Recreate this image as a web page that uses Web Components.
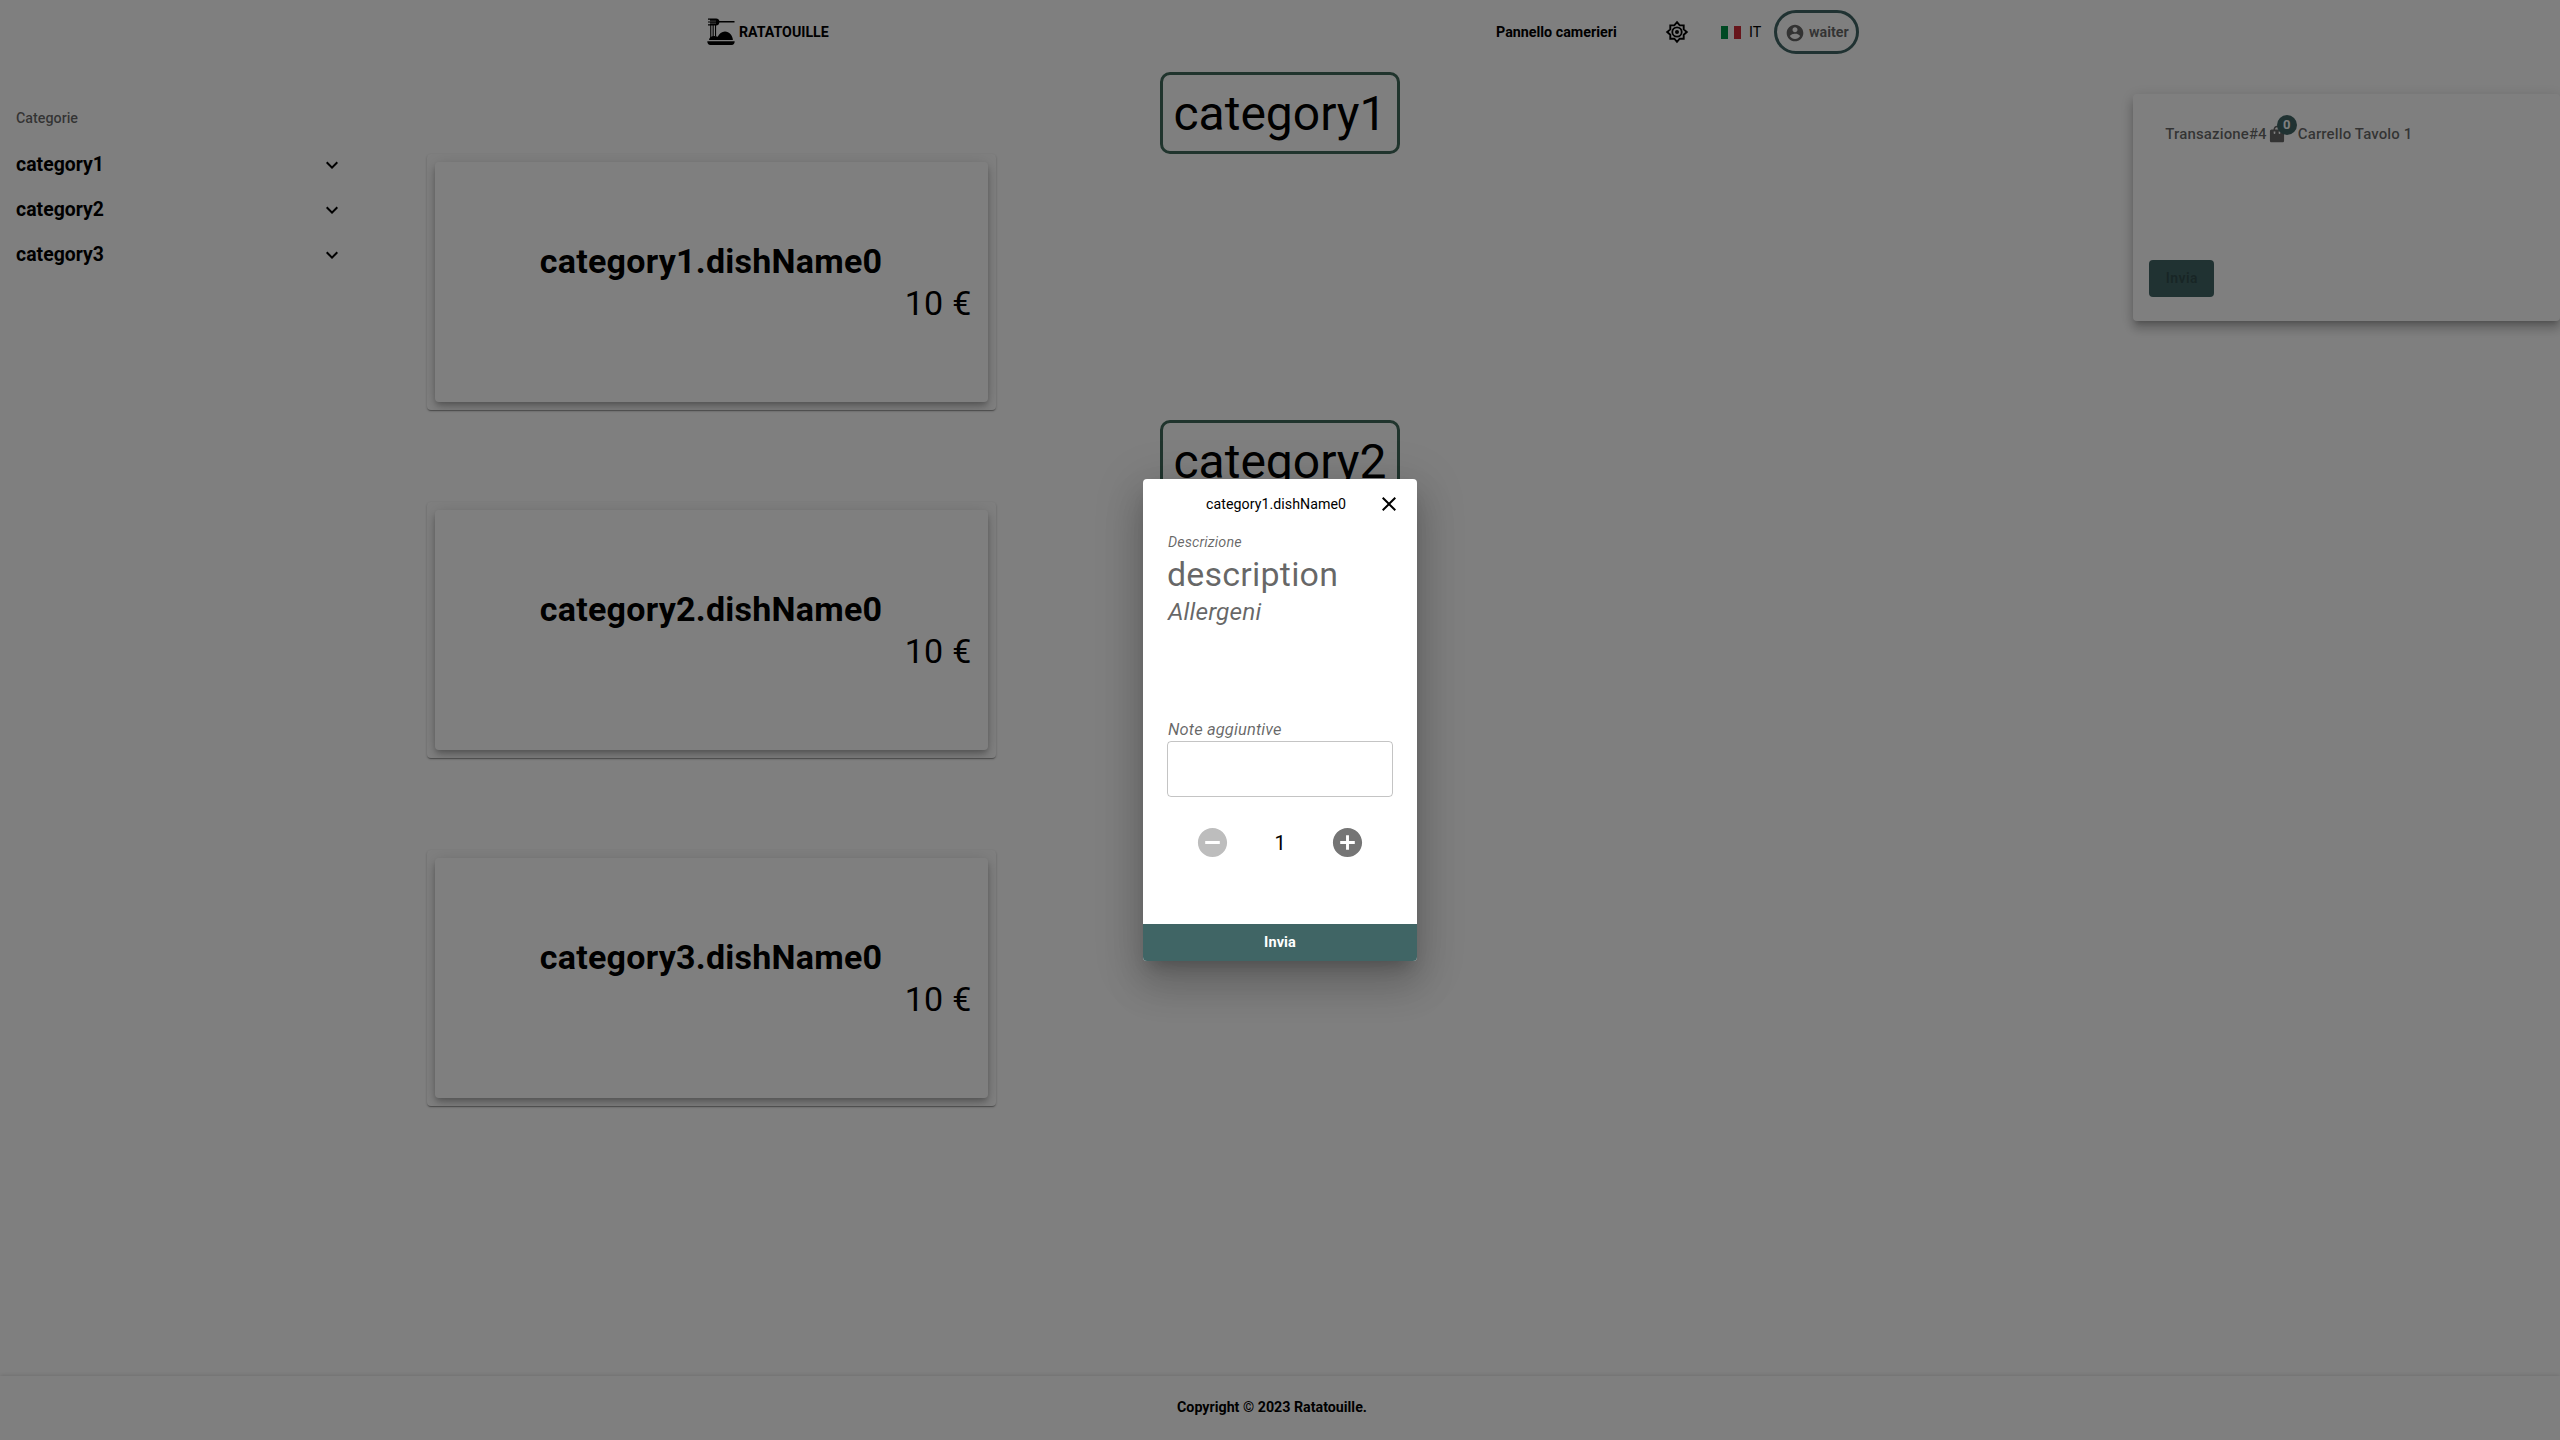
<!DOCTYPE html>
<html lang="it">
<head>
<meta charset="utf-8">
<title>Ratatouille</title>
<style>
html,body{margin:0;height:100%}
body{font-family:Roboto,"Liberation Sans",sans-serif;background:#fff;color:#000;overflow:hidden}
</style>
</head>
<body>
<rt-app></rt-app>
<script>
const define = (name, html) => {
  const t = document.createElement('template');
  t.innerHTML = html;
  customElements.define(name, class extends HTMLElement {
    constructor() {
      super();
      this.attachShadow({mode: 'open'}).appendChild(t.content.cloneNode(true));
    }
  });
};

define('rt-logo', `<style>
:host{display:flex;align-items:center;gap:4px;width:123px;font-weight:700;font-size:14.200px;line-height:20px}
svg{display:block;width:28px;height:28px}</style>
<svg viewBox="0 0 28 28"><g fill="#000">
<path d="M1 .5h8.200c2 0 2.700 1 3.200 2.600H27.500v1.500H12.400C11.900 6.400 11.200 7.600 9.200 7.600H1V6.300h2V4.600H1V3.400h2V1.800H1z"/>
<path d="M3.200 2h1.100v18.500H3.200zM5.600 2h1.100v17H5.600zM8 2h1.100v16.500H8z"/>
<path d="M2 22c.2-2.800 2.500-4 5-4 1.500 0 2.600.3 3.700.8C12 15.600 14.800 13.400 18 13.400c4.200 0 7.600 3.600 7.900 8.600z"/>
<path d="M.3 23.200h27.400c0 2.300-1.200 3.800-3 3.800H3.300c-1.800 0-3-1.500-3-3.800z"/></g>
<path d="M3 3.100h6M3 5.200h6" stroke="#fff" stroke-width=".5"/></svg>
<slot></slot>`);

define('rt-user', `<style>
:host{display:flex;align-items:center;box-sizing:border-box;width:85px;height:44px;border:3px solid #406565;border-radius:22px;padding-left:8px;gap:4px;color:rgba(0,0,0,.6);font-size:14.300px;font-weight:700}
svg{width:20px;height:20px;fill:rgba(0,0,0,.6);margin-top:2px}</style>
<svg viewBox="0 0 24 24"><path d="M12 2C6.480 2 2 6.480 2 12s4.480 10 10 10 10-4.480 10-10S17.520 2 12 2zm0 3c1.660 0 3 1.340 3 3s-1.340 3-3 3-3-1.340-3-3 1.340-3 3-3zm0 14.200c-2.500 0-4.710-1.280-6-3.220.03-1.990 4-3.080 6-3.080 1.990 0 5.970 1.090 6 3.080-1.290 1.940-3.500 3.220-6 3.220z"/></svg><span><slot></slot></span>`);

define('rt-header', `<style>
:host{display:flex;align-items:center;height:64px;box-sizing:border-box;padding-left:707px}
.panel{margin-left:666px;width:169px;font-size:14.300px;font-weight:700}
.gear{width:24px;height:24px;display:block}
.flag{display:flex;width:20px;height:13px;margin-left:32px}
.flag i{flex:1}
.it{font-size:14.300px;margin-left:8px;width:25px}
</style>
<rt-logo>RATATOUILLE</rt-logo>
<span class="panel">Pannello camerieri</span>
<svg class="gear" viewBox="0 0 24 24" fill="none" stroke="#000"><path stroke-width="1.900" stroke-linejoin="miter" d="M12 2.200l2.700 3.200h4v4L21.800 12l-3.100 2.700v4h-4L12 21.800l-2.700-3.100h-4v-4L2.200 12l3.100-2.600v-4h4z"/><circle cx="12" cy="12" r="4.700" stroke-width="1.800"/><circle cx="12" cy="12" r="2" fill="#000" stroke="none"/></svg>
<span class="flag"><i style="background:#009246"></i><i style="background:#fff"></i><i style="background:#ce2b37"></i></span>
<span class="it">IT</span>
<rt-user>waiter</rt-user>`);

define('rt-nav-item', `<style>
:host{display:flex;align-items:center;justify-content:space-between;height:45px;font-size:19.400px;font-weight:700;letter-spacing:.03px}
span{line-height:24px}
svg{width:24px;height:24px}</style>
<span><slot></slot></span><svg viewBox="0 0 24 24"><path d="M16.590 8.590 12 13.170 7.410 8.590 6 10l6 6 6-6z"/></svg>`);

define('rt-sidebar', `<style>
:host{display:block;box-sizing:border-box;padding:38px 83px 0 16px}
.h{font-size:14.300px;font-weight:500;line-height:32px;height:40px;color:rgba(0,0,0,.6)}</style>
<div class="h">Categorie</div>
<rt-nav-item>category1</rt-nav-item><rt-nav-item>category2</rt-nav-item><rt-nav-item>category3</rt-nav-item>`);

define('rt-dish', `<style>
:host{display:block;box-sizing:border-box;width:33.3333%;height:256px;padding:8px;border-radius:4px;overflow:hidden;background:#fff;box-shadow:0 2px 1px -1px rgba(0,0,0,.2),0 1px 1px 0 rgba(0,0,0,.14),0 1px 3px 0 rgba(0,0,0,.2)}
.in{height:240px;display:flex;flex-direction:column;justify-content:center;box-sizing:border-box;padding:0 16px;border-radius:4px;background:#fff;box-shadow:0 3px 5px -1px rgba(0,0,0,.2),0 6px 10px 0 rgba(0,0,0,.14),0 1px 18px 0 rgba(0,0,0,.12);font-size:34px;line-height:42px;letter-spacing:.25px}
.t{font-weight:700;text-align:center}.p{text-align:right}</style>
<div class="in"><div class="t"><slot></slot></div><div class="p">10 €</div></div>`);

define('rt-section', `<style>
:host{display:flex;flex-direction:column;height:348px}
.chip{align-self:center;box-sizing:border-box;width:240px;height:82px;border:3px solid #40685a;border-radius:10px;text-align:center;font-size:48px;line-height:56px;padding:11px 0 9px}
</style>
<div class="chip"><slot name="title"></slot></div><slot></slot>`);

define('rt-cart', `<style>
:host{display:block;box-sizing:border-box;height:227px;margin-top:30px;padding:24px 16px;border-radius:4px;background:#fff;box-shadow:0 5px 5px -3px rgba(0,0,0,.2),0 8px 10px 1px rgba(0,0,0,.14),0 3px 14px 2px rgba(0,0,0,.12)}
.row{display:flex;align-items:center;height:32px;padding-left:16px;font-size:15px;font-weight:500;letter-spacing:.13px;color:rgba(0,0,0,.6)}
.bag{position:relative;width:31px;height:20px}
.bag svg{display:block;width:20px;height:20px;fill:rgba(0,0,0,.6)}
.bag b{position:absolute;left:10px;top:-9px;width:20px;height:20px;border-radius:10px;background:#406565;color:#fff;font-size:13px;line-height:20px;text-align:center;font-weight:700;letter-spacing:0}
.btn{margin-top:110px;width:65px;height:37px;border-radius:4px;background:#406565;color:rgba(0,0,0,.26);font-size:14px;font-weight:700;line-height:37px;text-align:center;letter-spacing:.4px}
</style>
<div class="row"><span>Transazione#4</span><span class="bag"><svg viewBox="0 0 24 24"><path d="M18.500 6.500h-2.300C16.200 4 14.300 2 12 2S7.800 4 7.800 6.500H5.500c-1.100 0-2 .9-2 2v11.500c0 1.100.9 2 2 2h13c1.100 0 2-.9 2-2V8.500c0-1.100-.9-2-2-2zM10 11c0 .55-.45 1-1 1s-1-.45-1-1V9h2v2zm2-7.200c1.300 0 2.300 1.200 2.300 2.700H9.700c0-1.500 1-2.700 2.300-2.700zM16 11c0 .55-.45 1-1 1s-1-.45-1-1V9h2v2z"/></svg><b>0</b></span><span>Carrello Tavolo 1</span></div>
<div class="btn">Invia</div>`);

define('rt-footer', `<style>
:host{display:flex;align-items:center;justify-content:center;box-sizing:border-box;height:64px;padding:0 16px 2px 0;background:#fff;font-size:14.250px;font-weight:700;box-shadow:0 0 5px rgba(0,0,0,.18)}</style><slot></slot>`);

define('rt-dialog', `<style>
:host{display:flex;flex-direction:column;width:274px;height:482px;border-radius:4px;overflow:hidden;background:#fff;box-shadow:0 11px 15px -7px rgba(0,0,0,.2),0 24px 38px 3px rgba(0,0,0,.14),0 9px 46px 8px rgba(0,0,0,.12)}
.top{display:flex;align-items:center;height:50px;padding:0 16px 0 63px;justify-content:space-between;font-size:14.200px;letter-spacing:.05px}
.top svg{width:24px;height:24px}
.body{flex:1;display:flex;flex-direction:column;padding:0 24px;color:rgba(0,0,0,.6)}
.d,.al,.n{padding-left:1px}
.d{font-size:14.400px;font-style:italic;line-height:20px;margin-top:4px;letter-spacing:.1px}
.desc{font-size:34px;line-height:42px;letter-spacing:.2px}
.al{font-size:24.500px;font-style:italic;line-height:32px;margin:1px 0 -1px;letter-spacing:.12px}
.n{font-size:16.500px;font-style:italic;line-height:24px;margin:91px 0 -1px;letter-spacing:.12px}
.box{box-sizing:border-box;height:56px;border:1px solid rgba(0,0,0,.23);border-radius:4px}
.q{display:flex;align-items:center;justify-content:space-between;margin:27px 28px 0;color:#000;font-size:20px;height:36px}
.q span{padding-top:2px}
.q svg{width:35px;height:35px}
.send{height:37px;background:#406565;color:#fff;font-size:14.500px;font-weight:700;line-height:38px;text-align:center;letter-spacing:.1px}
</style>
<div class="top"><span><slot></slot></span><svg viewBox="0 0 24 24"><path d="M19 6.410 17.590 5 12 10.590 6.410 5 5 6.410 10.590 12 5 17.590 6.410 19 12 13.410 17.590 19 19 17.590 13.410 12z"/></svg></div>
<div class="body"><div class="d">Descrizione</div><div class="desc">description</div><div class="al">Allergeni</div><div class="n">Note aggiuntive</div><div class="box"></div>
<div class="q"><svg viewBox="0 0 24 24" fill="#bdbdbd"><path d="M12 2C6.480 2 2 6.480 2 12s4.480 10 10 10 10-4.480 10-10S17.520 2 12 2zm5 11H7v-2h10v2z"/></svg><span>1</span><svg viewBox="0 0 24 24" fill="#757575"><path d="M12 2C6.480 2 2 6.480 2 12s4.480 10 10 10 10-4.480 10-10S17.520 2 12 2zm5 11h-4v4h-2v-4H7v-2h4V7h2v4h4v2z"/></svg></div></div>
<div class="send">Invia</div>`);

define('rt-app', `<style>
:host{display:flex;flex-direction:column;height:1440px;width:2560px}
main{flex:1;min-height:0;display:grid;grid-template-columns:1fr 4fr 1fr;align-items:start}
.mid{padding-top:8px}
.covered{visibility:hidden}
.back{position:absolute;inset:0;background:rgba(0,0,0,.5);display:flex;align-items:center;justify-content:center}
</style>
<rt-header></rt-header>
<main><rt-sidebar></rt-sidebar>
<div class="mid">
<rt-section><span slot="title">category1</span><rt-dish>category1.dishName0</rt-dish></rt-section>
<rt-section><span slot="title">category2</span><rt-dish>category2.dishName0</rt-dish></rt-section>
<rt-section><span slot="title" class="covered">category3</span><rt-dish>category3.dishName0</rt-dish></rt-section>
</div>
<rt-cart></rt-cart></main>
<rt-footer>Copyright © 2023 Ratatouille.</rt-footer>
<div class="back"><rt-dialog>category1.dishName0</rt-dialog></div>`);
</script>
</body>
</html>
